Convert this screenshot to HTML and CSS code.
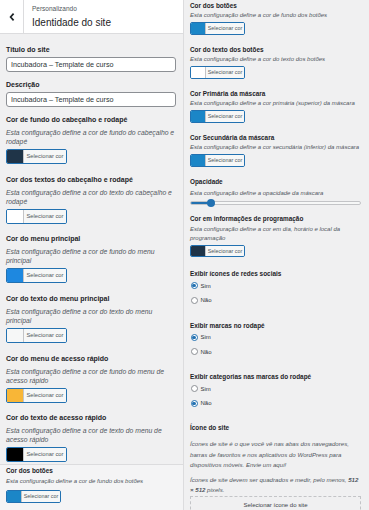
FILE: index.html
```html
<!DOCTYPE html>
<html lang="pt-BR">
<head>
<meta charset="utf-8">
<title>Identidade do site</title>
<link rel="stylesheet" href="styles.css">
</head>
<body>
<div class="page">
  <div class="col col-left">
    <header class="hdr">
      <div class="back">
        <svg width="8" height="10" viewBox="0 0 8 10"><path d="M5.6 1.6 L2.6 5 L5.6 8.4" fill="none" stroke="#1d2327" stroke-width="1.7"/></svg>
      </div>
      <div class="ttl">
        <span class="pre">Personalizando</span>
        <span class="name">Identidade do site</span>
      </div>
    </header>
    <div class="sec">
      <div class="ctl ctl-text">
        <div class="lbl">Título do site</div>
        <div class="inp">Incubadora – Template de curso</div>
      </div>
      <div class="ctl ctl-text">
        <div class="lbl">Descrição</div>
        <div class="inp">Incubadora – Template de curso</div>
      </div>
      <div class="ctl ctl-color">
        <div class="lbl">Cor de fundo do cabeçalho e rodapé</div>
        <div class="desc">Esta configuração define a cor de fundo do cabeçalho e rodapé</div>
        <div class="cbtn"><span class="sw sw-navy"></span><span class="ctxt">Selecionar cor</span></div>
      </div>
      <div class="ctl ctl-color">
        <div class="lbl">Cor dos textos do cabeçalho e rodapé</div>
        <div class="desc">Esta configuração define a cor do texto do cabeçalho e rodapé</div>
        <div class="cbtn"><span class="sw sw-white"></span><span class="ctxt">Selecionar cor</span></div>
      </div>
      <div class="ctl ctl-color">
        <div class="lbl">Cor do menu principal</div>
        <div class="desc">Esta configuração define a cor de fundo do menu principal</div>
        <div class="cbtn"><span class="sw sw-bright"></span><span class="ctxt">Selecionar cor</span></div>
      </div>
      <div class="ctl ctl-color">
        <div class="lbl">Cor do texto do menu principal</div>
        <div class="desc">Esta configuração define a cor do texto do menu principal</div>
        <div class="cbtn"><span class="sw sw-offwhite"></span><span class="ctxt">Selecionar cor</span></div>
      </div>
      <div class="ctl ctl-color">
        <div class="lbl">Cor do menu de acesso rápido</div>
        <div class="desc">Esta configuração define a cor de fundo do menu de acesso rápido</div>
        <div class="cbtn"><span class="sw sw-yellow"></span><span class="ctxt">Selecionar cor</span></div>
      </div>
      <div class="ctl ctl-color">
        <div class="lbl">Cor do texto de acesso rápido</div>
        <div class="desc">Esta configuração define a cor de texto do menu de acesso rápido</div>
        <div class="cbtn"><span class="sw sw-black"></span><span class="ctxt">Selecionar cor</span></div>
      </div>
    </div>
    <div class="strip">
      <div class="lbl-s">Cor dos botões</div>
      <div class="desc-s">Esta configuração define a cor de fundo dos botões</div>
      <div class="cbtn-s"><span class="sw-s sw-blue"></span><span class="ctxt-s">Selecionar cor</span></div>
    </div>
  </div>

  <div class="col col-right">
    <div class="ctl-s">
      <div class="lbl-s">Cor dos botões</div>
      <div class="desc-s">Esta configuração define a cor de fundo dos botões</div>
      <div class="cbtn-s"><span class="sw-s sw-blue"></span><span class="ctxt-s">Selecionar cor</span></div>
    </div>
    <div class="ctl-s">
      <div class="lbl-s">Cor do texto dos botões</div>
      <div class="desc-s">Esta configuração define a cor do texto dos botões</div>
      <div class="cbtn-s"><span class="sw-s sw-white"></span><span class="ctxt-s">Selecionar cor</span></div>
    </div>
    <div class="ctl-s">
      <div class="lbl-s">Cor Primária da máscara</div>
      <div class="desc-s">Esta configuração define a cor primária (superior) da máscara</div>
      <div class="cbtn-s"><span class="sw-s sw-blue"></span><span class="ctxt-s">Selecionar cor</span></div>
    </div>
    <div class="ctl-s">
      <div class="lbl-s">Cor Secundária da máscara</div>
      <div class="desc-s">Esta configuração define a cor secundária (inferior) da máscara</div>
      <div class="cbtn-s"><span class="sw-s sw-blue"></span><span class="ctxt-s">Selecionar cor</span></div>
    </div>
    <div class="ctl-s ctl-range">
      <div class="lbl-s">Opacidade</div>
      <div class="desc-s">Esta configuração define a opacidade da máscara</div>
      <div class="range">
        <div class="track"><div class="fill" style="width:12%"></div></div>
        <div class="thumb" style="left:12%"></div>
      </div>
    </div>
    <div class="ctl-s ctl-info">
      <div class="lbl-s">Cor em informações de programação</div>
      <div class="desc-s">Esta configuração define a cor em dia, horário e local da programação</div>
      <div class="cbtn-s"><span class="sw-s sw-navy"></span><span class="ctxt-s">Selecionar cor</span></div>
    </div>
    <div class="rgroup">
      <div class="lbl-s rlbl">Exibir ícones de redes sociais</div>
      <div class="ropt"><span class="radio on"></span><span class="rtxt">Sim</span></div>
      <div class="ropt"><span class="radio"></span><span class="rtxt">Não</span></div>
    </div>
    <div class="rgroup">
      <div class="lbl-s rlbl">Exibir marcas no rodapé</div>
      <div class="ropt"><span class="radio on"></span><span class="rtxt">Sim</span></div>
      <div class="ropt"><span class="radio"></span><span class="rtxt">Não</span></div>
    </div>
    <div class="rgroup rgroup-last">
      <div class="lbl-s rlbl">Exibir categorias nas marcas do rodapé</div>
      <div class="ropt"><span class="radio"></span><span class="rtxt">Sim</span></div>
      <div class="ropt"><span class="radio on"></span><span class="rtxt">Não</span></div>
    </div>
    <div class="icon-ctl">
      <div class="lbl-s">Ícone do site</div>
      <p class="ipara">Ícones de site é o que você vê nas abas dos navegadores, barras de favoritos e nos aplicativos do WordPress para dispositivos móveis. Envie um aqui!</p>
      <p class="ipara ipara2">Ícones de site devem ser quadrados e medir, pelo menos, <b>512</b><br><b>× 512</b> pixels.</p>
      <div class="upload">Selecionar ícone do site</div>
    </div>
  </div>
</div>
</body>
</html>
```

FILE: styles.css
```css
* { box-sizing: border-box; }
html, body { margin: 0; padding: 0; }
body {
  background: #f0f0f1;
  font-family: "Liberation Sans", Arial, sans-serif;
  color: #1d2327;
}
.page {
  display: flex;
  width: 369px;
  height: 510px;
  overflow: hidden;
}
.col { background: #f0f0f1; }
.col-left {
  width: 184px;
  flex: none;
  border-right: 1px solid #dcdcde;
  display: flex;
  flex-direction: column;
}
.col-right {
  width: 185px;
  flex: none;
  padding: 0.5px 6px 0 6px;
}

/* header */
.hdr {
  height: 34px;
  flex: none;
  background: #fff;
  border-bottom: 1px solid #dcdcde;
  display: flex;
}
.back {
  width: 24px;
  border-right: 1px solid #dcdcde;
  display: flex;
  align-items: center;
  justify-content: center;
  padding-top: 1px;
}
.ttl {
  display: flex;
  flex-direction: column;
  padding: 3.5px 0 0 8px;
}
.pre {
  font-size: 6.5px;
  line-height: 9px;
  color: #50575e;
}
.name {
  font-size: 10px;
  line-height: 13px;
  margin-top: 3.5px;
  color: #1d2327;
}

/* left section */
.sec {
  padding: 11px 7px 0 6px;
}
.ctl-text { margin-bottom: 8px; }
.lbl {
  font-size: 7px;
  line-height: 10px;
  font-weight: bold;
  color: #1d2327;
}
.ctl-text .lbl { margin-bottom: 2px; }
.inp {
  height: 15px;
  background: #fff;
  border: 1px solid #8c8f94;
  border-radius: 3px;
  font-size: 7.2px;
  line-height: 13px;
  padding-left: 4px;
  color: #2c3338;
}
.ctl-color { margin-bottom: 10.7px; }
.ctl-color:last-child { margin-bottom: 1.5px; }
.ctl-color .lbl { margin-bottom: 3px; }
.desc {
  font-size: 6.8px;
  line-height: 9px;
  font-style: italic;
  color: #50575e;
  margin-bottom: 3px;
}
.cbtn {
  display: flex;
  width: 61px;
  height: 15px;
  border: 1px solid #2271b1;
  border-radius: 2px;
  overflow: hidden;
  background: #f6f7f7;
}
.sw { width: 16px; flex: none; }
.ctxt {
  flex: 1;
  border-left: 1px solid #c3c4c7;
  background: #f6f7f7;
  font-size: 5.8px;
  line-height: 13px;
  text-align: center;
  color: #50575e;
}

.sw-navy { background: #1f3448; }
.sw-white { background: #fff; }
.sw-bright { background: #1e88e0; }
.sw-offwhite { background: #f6f7f7; }
.sw-yellow { background: #f8b637; }
.sw-black { background: #000; }
.sw-blue { background: #1b86c7; }

/* bottom strip of left column */
.strip {
  flex: 1;
  border-top: 1px solid #dcdcde;
  background: #f4f4f5;
  padding: 1.5px 6px 0 6px;
}
.strip .lbl-s { margin-bottom: 2px; }
.strip .desc-s { margin-bottom: 4px; }

/* small scale controls */
.ctl-s { margin-bottom: 10px; }
.lbl-s {
  font-size: 6.4px;
  line-height: 9px;
  font-weight: bold;
  color: #1d2327;
  margin-bottom: 1.5px;
}
.desc-s {
  font-size: 6px;
  line-height: 9px;
  font-style: italic;
  color: #50575e;
  margin-bottom: 2px;
}
.cbtn-s {
  display: flex;
  width: 55px;
  height: 12.6px;
  border: 1px solid #2271b1;
  border-radius: 2px;
  overflow: hidden;
  background: #f6f7f7;
}
.sw-s { width: 14px; flex: none; }
.ctxt-s {
  flex: 1;
  border-left: 1px solid #c3c4c7;
  background: #f6f7f7;
  font-size: 5.4px;
  line-height: 10.6px;
  text-align: center;
  color: #50575e;
}

/* range */
.ctl-range { margin-top: 2px; margin-bottom: 7.2px; }
.ctl-range .lbl-s { margin-bottom: 3px; }
.ctl-range .desc-s { margin-bottom: 1px; }
.range {
  position: relative;
  height: 8px;
  margin-right: 2px;
}
.track {
  position: relative;
  top: 2px;
  height: 4px;
  border: 1px solid #c3c4c7;
  border-radius: 3px;
  background: #f6f7f7;
  overflow: hidden;
}
.fill {
  height: 100%;
  background: #2271b1;
}
.thumb {
  position: absolute;
  top: 0;
  width: 8px;
  height: 8px;
  margin-left: -4px;
  border-radius: 50%;
  background: #2271b1;
}

.ctl-info { margin-bottom: 12px; }

/* radios */
.rgroup { margin-bottom: 16px; }
.rgroup-last { margin-bottom: 15.5px; }
.rlbl { margin-bottom: 3px; }
.ropt {
  display: flex;
  align-items: center;
  height: 9px;
  margin-bottom: 5.6px;
}
.ropt:last-child { margin-bottom: 0; }
.radio {
  width: 7px;
  height: 7px;
  margin-left: 0.5px;
  border: 1px solid #8c8f94;
  border-radius: 50%;
  background: #fff;
  display: flex;
  align-items: center;
  justify-content: center;
}
.radio.on { border-color: #2271b1; }
.radio.on::after {
  content: "";
  width: 3.4px;
  height: 3.4px;
  border-radius: 50%;
  background: #2271b1;
}
.rtxt {
  font-size: 6px;
  margin-left: 3px;
  color: #2c3338;
}

/* site icon */
.icon-ctl .lbl-s { margin-bottom: 0; }
.ipara {
  margin: 7px 2px 0 0;
  font-size: 6.1px;
  line-height: 10.5px;
  font-style: italic;
  color: #50575e;
}
.ipara2 { margin-top: 4px; }
.ipara b { font-weight: bold; }
.upload {
  margin-top: 0;
  margin-right: 2px;
  height: 24px;
  border: 1px dashed #c3c4c7;
  font-size: 6px;
  line-height: 16px;
  text-align: center;
  color: #3c434a;
}
```
